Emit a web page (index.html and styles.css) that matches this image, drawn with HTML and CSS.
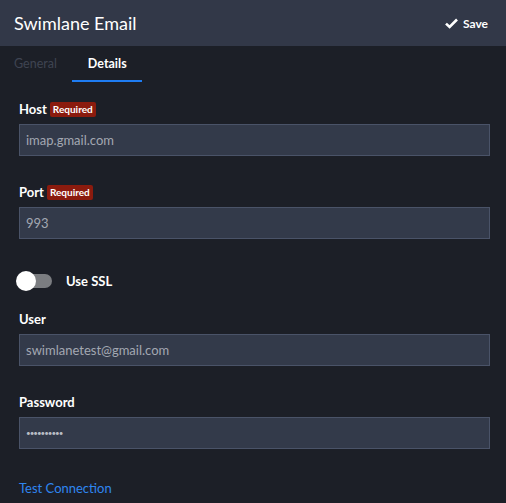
FILE: index.html
```html
<!DOCTYPE html>
<html>
<head>
<meta charset="utf-8">
<link rel="stylesheet" href="styles.css">
</head>
<body>
<header class="header">
  <h1 class="title">Swimlane Email</h1>
  <button class="save">
    <svg class="check" width="13" height="11" viewBox="0 0 13 11"><path d="M1 5.6 L4.6 9 L12 1.5" fill="none" stroke="#fff" stroke-width="2.6" stroke-linejoin="miter"/></svg>
    <span>Save</span>
  </button>
</header>
<nav class="tabs">
  <div class="tab">General</div>
  <div class="tab active">Details</div>
</nav>
<main class="form">
  <div class="field">
    <label class="label">Host <span class="badge">Required</span></label>
    <div class="input">imap.gmail.com</div>
  </div>
  <div class="field">
    <label class="label">Port <span class="badge">Required</span></label>
    <div class="input">993</div>
  </div>
  <div class="toggle-row">
    <div class="toggle"><div class="track"></div><div class="knob"></div></div>
    <span class="toggle-label">Use SSL</span>
  </div>
  <div class="field">
    <label class="label">User</label>
    <div class="input">swimlanetest@gmail.com</div>
  </div>
  <div class="field">
    <label class="label">Password</label>
    <div class="input pw">••••••••••</div>
  </div>
  <a class="link">Test Connection</a>
</main>
</body>
</html>
```
FILE: styles.css
```css
* { box-sizing: border-box; }
html, body { margin: 0; padding: 0; }
body {
  width: 506px; height: 503px; overflow: hidden;
  background: #1c1f27;
  font-family: Lato, "Noto Sans", sans-serif;
  color: #fff;
}
.header {
  height: 46px;
  background: #323848;
  display: flex; align-items: center; justify-content: space-between;
  padding: 0 18px 0 14px;
}
.title { margin: 0; font-size: 18px; font-weight: 400; color: #fff; }
.save {
  background: none; border: 0; padding: 0; color: #fff;
  font-family: inherit; font-size: 12px; font-weight: 700;
  display: flex; align-items: center; gap: 5px;
}
.tabs { display: flex; height: 36px; }
.tab {
  font-size: 12.5px; color: #3f4452; padding: 0 14px;
  display: flex; align-items: center; height: 34px;
  margin-right: 1px;
}
.tab.active {
  color: #fff; font-weight: 700; padding: 0 15px 0 16px;
  border-bottom: 2px solid #1e7cf2; height: 36px;
}
.form { padding: 19px 16px 0 19px; }
.field { margin-bottom: 28px; }
.label {
  display: flex; align-items: center; gap: 3px;
  font-size: 13px; font-weight: 700; color: #fff;
  height: 16px; margin-bottom: 7px;
}
.badge {
  background: #8b1b0e; color: #fff; font-size: 10px; font-weight: 700;
  padding: 0 3px; height: 15px; line-height: 15px; border-radius: 2px;
}
.input {
  height: 32px; background: #333a4a; border: 1px solid #4a5368;
  color: #a3a8b2; font-size: 13px; padding: 0 6px;
  display: flex; align-items: center;
}
.pw { font-size: 8px; letter-spacing: -1px; color: #b8bcc4; }
.toggle-row { display: flex; align-items: center; height: 20px; margin: 32px 0 20px -3px; }
.toggle { position: relative; width: 37px; height: 20px; }
.track { position: absolute; left: 5px; top: 3px; width: 31px; height: 14px; border-radius: 7px; background: #7b7d81; }
.knob { position: absolute; left: 0; top: 0; width: 20px; height: 20px; border-radius: 50%; background: #fff; }
.toggle-label { margin-left: 13px; font-size: 13px; font-weight: 700; }
.link { display: block; color: #2f86f0; font-size: 13px; line-height: 16px; margin-top: 31px; }
```
